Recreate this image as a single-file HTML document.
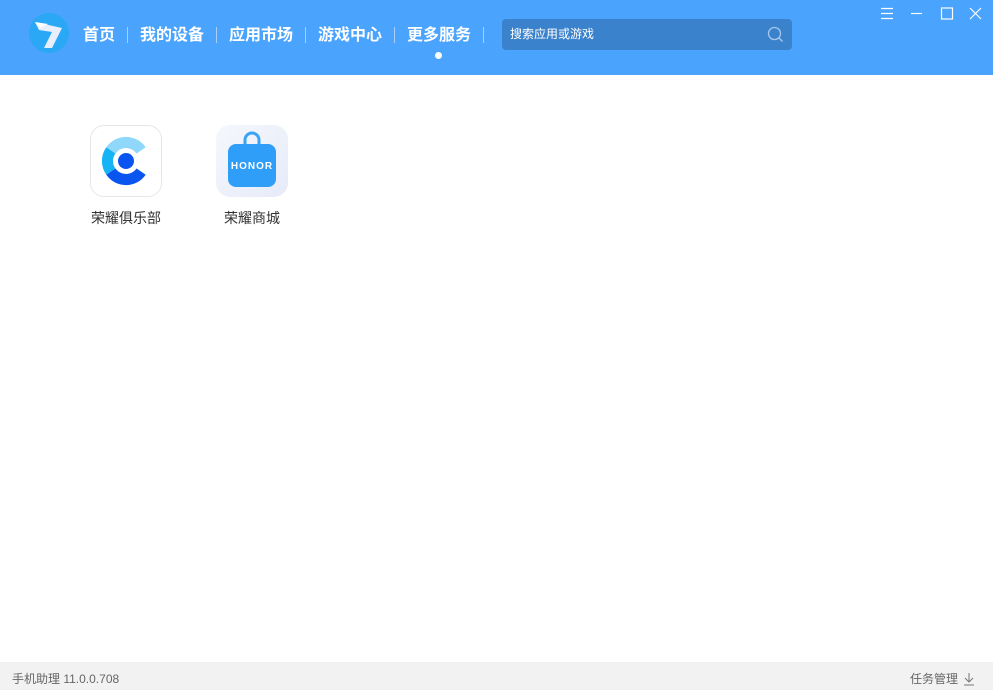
<!DOCTYPE html>
<html><head><meta charset="utf-8"><style>
*{margin:0;padding:0;box-sizing:border-box}
body{width:993px;height:690px;position:relative;background:#fff;font-family:"Liberation Sans","Noto Sans CJK SC",sans-serif;overflow:hidden}
.hdr{position:absolute;left:0;top:0;width:993px;height:75px;background:#4aa3fd}
.nav{position:absolute;top:25px;color:#fff;font-size:16px;font-weight:bold;line-height:22px;white-space:nowrap}
.sep{position:absolute;top:27px;width:1px;height:16px;background:#a9d0fb}
.search{position:absolute;left:502px;top:19px;width:290px;height:31px;background:#3b82cc;border-radius:4px;color:#fff;font-size:12px;line-height:31px;padding-left:8px}
.foot{position:absolute;left:0;top:662px;width:993px;height:28px;background:#f2f2f2;color:#666;font-size:12px;line-height:34px}
.lbl{position:absolute;top:208px;font-size:14px;color:#333;width:120px;text-align:center}
</style></head><body>
<div class="hdr">
<svg style="position:absolute;left:28px;top:12px" width="42" height="42" viewBox="0 0 42 42">
<circle cx="21" cy="21" r="20" fill="#2aa8f5"/>
<path d="M7 10 L34 16 L24 36 L16 36 L24 20 L11 18 Z" fill="#e8eefc"/>
<path d="M7 10 L20 12 L12 16 Z" fill="#fff"/>
</svg>
<div class="nav" style="left:83px">首页</div><div class="sep" style="left:127px"></div>
<div class="nav" style="left:140px">我的设备</div><div class="sep" style="left:216px"></div>
<div class="nav" style="left:229px">应用市场</div><div class="sep" style="left:305px"></div>
<div class="nav" style="left:318px">游戏中心</div><div class="sep" style="left:394px"></div>
<div class="nav" style="left:407px">更多服务</div><div class="sep" style="left:483px"></div>
<div style="position:absolute;left:435px;top:52px;width:7px;height:7px;border-radius:50%;background:#fff"></div>
<div class="search">搜索应用或游戏
<svg style="position:absolute;right:8px;top:7px" width="17" height="17" viewBox="0 0 17 17"><circle cx="7.5" cy="7.5" r="6" fill="none" stroke="#a7c8ec" stroke-width="1.3"/><path d="M12 12 L15.5 15.5" stroke="#a7c8ec" stroke-width="1.4"/></svg></div>
<svg style="position:absolute;left:880px;top:7px" width="105" height="14" viewBox="0 0 105 14">
<g stroke="#fff" stroke-width="1.2" fill="none">
<path d="M1 1.5H13M1 6.5H13M1 11.5H13"/>
<path d="M31 6.5H42"/>
<rect x="61.5" y="1" width="11" height="11"/>
<path d="M90 1L101 12M101 1L90 12"/>
</g></svg>
</div>

<div style="position:absolute;left:90px;top:125px;width:72px;height:72px;border:1px solid #e6e6e6;border-radius:14px;background:#fff"></div>
<svg style="position:absolute;left:90px;top:125px" width="72" height="72" viewBox="0 0 72 72">
<path d="M55.7 22.2 A24 24 0 0 0 16.3 22.2 L25.4 28.5 A13 13 0 0 1 46.6 28.5 Z" fill="#8fd8fb"/>
<path d="M16.3 22.2 A24 24 0 0 0 16.3 49.8 L25.4 43.5 A13 13 0 0 1 25.4 28.5 Z" fill="#17b4f5"/>
<path d="M16.3 49.8 A24 24 0 0 0 55.7 49.8 L46.6 43.5 A13 13 0 0 1 25.4 43.5 Z" fill="#0a55f0"/>
<circle cx="36" cy="36" r="8" fill="#0a55f0"/>
</svg>
<div class="lbl" style="left:66px">荣耀俱乐部</div>

<div style="position:absolute;left:216px;top:125px;width:72px;height:72px;border-radius:14px;background:linear-gradient(135deg,#f5f7fd,#e6ebf8)"></div>
<svg style="position:absolute;left:216px;top:125px" width="72" height="72" viewBox="0 0 72 72">
<path d="M29 20 V15 A7 7 0 0 1 43 15 V20" fill="none" stroke="#3ba3f6" stroke-width="3"/>
<rect x="12" y="19" width="48" height="43" rx="8" fill="#2f9ef8"/>
<text x="36" y="44" text-anchor="middle" font-family="Liberation Sans" font-weight="bold" font-size="10" fill="#fff" letter-spacing="1">HONOR</text>
</svg>
<div class="lbl" style="left:192px">荣耀商城</div>

<div class="foot"><span style="position:absolute;left:12px">手机助理 11.0.0.708</span>
<span style="position:absolute;left:910px">任务管理</span>
<svg style="position:absolute;left:963px;top:10px" width="12" height="14" viewBox="0 0 12 14"><path d="M6 1V10M2 6L6 10L10 6M1 13H11" fill="none" stroke="#777" stroke-width="1"/></svg>
</div>
</body></html>
